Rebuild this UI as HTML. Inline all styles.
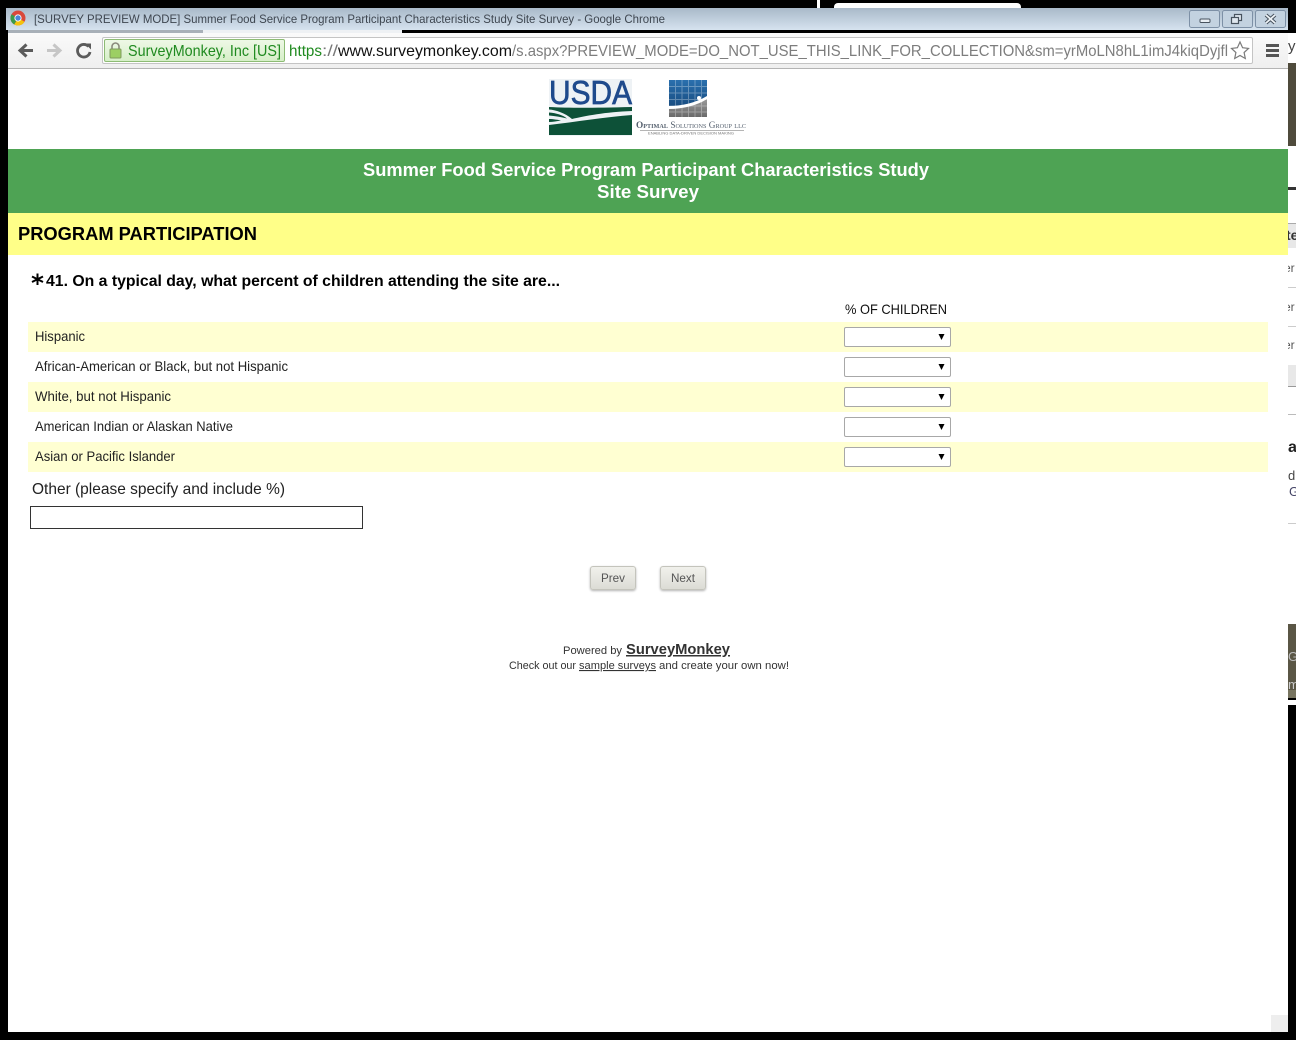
<!DOCTYPE html>
<html lang="en">
<head>
<meta charset="utf-8">
<title>[SURVEY PREVIEW MODE] Summer Food Service Program Participant Characteristics Study Site Survey</title>
<style>
html,body{margin:0;padding:0;width:1296px;height:1040px;overflow:hidden;background:#000}
div{position:absolute;box-sizing:border-box}
svg{position:absolute;left:0;top:0}
text{font-family:"Liberation Sans",Arial,sans-serif;white-space:pre}
.row{left:28px;width:1240px;height:30px;background:#ffffd2}
.sel{left:844px;width:107px;height:20px;background:#fff;border:1px solid #a8a8a8;border-radius:2px}
.btn{top:566px;width:46px;height:24px;border:1px solid #c4c4bc;border-radius:3px;background:linear-gradient(#f1f1ec,#dcdcd5);box-shadow:0 1px 2px rgba(0,0,0,.3)}
</style>
</head>
<body>
<!-- background window peeking behind -->
<div style="left:817px;top:0;width:3px;height:8px;background:#fff"></div>
<div style="left:834px;top:3px;width:187px;height:6px;background:#fff;border-radius:4px 4px 0 0"></div>

<!-- right sliver -->
<div style="left:1288px;top:33px;width:8px;height:672px;background:#fff"></div>
<div style="left:1288px;top:63px;width:8px;height:83px;background:#4f4b3c"></div>
<div style="left:1288px;top:187px;width:8px;height:3px;background:#333"></div>
<div style="left:1288px;top:223px;width:8px;height:25px;background:#e8e8e8;border-top:1px solid #aaa"></div>
<div style="left:1288px;top:287px;width:8px;height:1px;background:#ccc"></div>
<div style="left:1288px;top:326px;width:8px;height:1px;background:#ccc"></div>
<div style="left:1288px;top:365px;width:8px;height:22px;background:#e8e8e8;border-bottom:1px solid #999"></div>
<div style="left:1288px;top:414px;width:8px;height:1px;background:#bbb"></div>
<div style="left:1288px;top:523px;width:8px;height:1px;background:#ccc"></div>
<div style="left:1288px;top:624px;width:8px;height:66px;background:#5a5645"></div>
<div style="left:1288px;top:690px;width:8px;height:8px;background:#77745f"></div>
<div style="left:1288px;top:698px;width:8px;height:2px;background:#000"></div>

<!-- title bar -->
<div style="left:6px;top:8px;width:1282px;height:22px;background:linear-gradient(#a9b9c9,#d6e3ef)"></div>
<div style="left:8px;top:30px;width:195px;height:3px;background:#a8b0b8"></div>
<div style="left:203px;top:30px;width:199px;height:3px;background:#eef1f4"></div>
<div style="left:402px;top:30px;width:886px;height:3px;background:#000"></div>
<!-- toolbar -->
<div style="left:8px;top:33px;width:1280px;height:36px;background:linear-gradient(#fafafa,#efefef);border-bottom:1px solid #b4b4b4"></div>
<div style="left:102px;top:37px;width:1151px;height:27px;background:#fff;border:1px solid #c4c4c4;border-radius:2px"></div>
<div style="left:104px;top:39px;width:181px;height:23px;background:linear-gradient(#eef8e6,#d6efc8);border:1px solid #8dbb74;border-radius:2px"></div>

<!-- page -->
<div style="left:8px;top:69px;width:1280px;height:963px;background:#fff"></div>
<div style="left:8px;top:149px;width:1280px;height:64px;background:#4ea354"></div>
<div style="left:8px;top:213px;width:1280px;height:42px;background:#ffff88"></div>

<div class="row" style="top:322px"></div>
<div class="row" style="top:382px"></div>
<div class="row" style="top:442px"></div>
<div class="sel" style="top:327px"></div>
<div class="sel" style="top:357px"></div>
<div class="sel" style="top:387px"></div>
<div class="sel" style="top:417px"></div>
<div class="sel" style="top:447px"></div>
<div style="left:30px;top:506px;width:333px;height:23px;background:#fff;border:1px solid #333"></div>
<div class="btn" style="left:590px"></div>
<div class="btn" style="left:660px"></div>
<div style="left:1271px;top:1015px;width:17px;height:17px;background:#eee"></div>

<svg width="1296" height="1040" viewBox="0 0 1296 1040" xmlns="http://www.w3.org/2000/svg">
  <defs>
    <linearGradient id="b" x1="0" y1="0" x2="0" y2="1"><stop offset="0" stop-color="#2a70ae"/><stop offset="1" stop-color="#123f6f"/></linearGradient>
    <linearGradient id="g" x1="0" y1="0" x2="0" y2="1"><stop offset="0" stop-color="#9a9a9a"/><stop offset="1" stop-color="#6a6a6a"/></linearGradient>
    <clipPath id="sliver"><rect x="1288" y="33" width="8" height="672"/></clipPath>
  </defs>
  <!-- Chrome logo -->
  <circle cx="18" cy="18" r="7.5" fill="#d9483b"/>
  <path d="M18 18 L24.5 21.8 A7.5 7.5 0 0 1 14.2 24.5 Z" fill="#f4c20d"/>
  <path d="M18 18 L14.2 24.5 A7.5 7.5 0 0 1 11.5 14.2 Z" fill="#3c9b4a"/>
  <circle cx="18" cy="18" r="3.6" fill="#fff"/>
  <circle cx="18" cy="18" r="2.7" fill="#4a86d8"/>

  <text x="34" y="23" font-size="12" fill="#3e4650" textLength="631" lengthAdjust="spacingAndGlyphs">[SURVEY PREVIEW MODE] Summer Food Service Program Participant Characteristics Study Site Survey - Google Chrome</text>

  <!-- window buttons -->
  <g fill="#c3d2e0" stroke="#7d90a6">
    <rect x="1189.5" y="10.5" width="30" height="17" rx="2"/>
    <rect x="1222.5" y="10.5" width="30" height="17" rx="2"/>
    <rect x="1255.5" y="10.5" width="30" height="17" rx="2"/>
  </g>
  <rect x="1200" y="19" width="10" height="3.5" rx="1" fill="#e8eef4" stroke="#47525e"/>
  <g fill="#dfe7ef" stroke="#47525e" stroke-width="1.2">
    <rect x="1234.5" y="14.5" width="7" height="6"/>
    <rect x="1231.5" y="17.5" width="7" height="6"/>
  </g>
  <path d="M1266 15 L1275 23 M1275 15 L1266 23" stroke="#47525e" stroke-width="3.8"/>
  <path d="M1266 15 L1275 23 M1275 15 L1266 23" stroke="#eef3f7" stroke-width="1.8"/>

  <!-- nav icons -->
  <path d="M33 50.5 H21 M26.5 44.5 L20 50.5 L26.5 56.5" fill="none" stroke="#5b5b5b" stroke-width="3"/>
  <path d="M47 50.5 H59 M53.5 44.5 L60 50.5 L53.5 56.5" fill="none" stroke="#c6c6c6" stroke-width="3"/>
  <path d="M88.5 46.5 A6.3 6.3 0 1 0 90 52" fill="none" stroke="#5b5b5b" stroke-width="2.8"/>
  <path d="M85 43.5 L91 43.5 L91 49.5 Z" fill="#5b5b5b"/>

  <!-- lock -->
  <path d="M112 49 V46.5 A3.5 3.5 0 0 1 119 46.5 V49" fill="none" stroke="#8a8a7c" stroke-width="1.6"/>
  <rect x="110" y="49" width="11" height="9" rx="1" fill="#9ccf63" stroke="#7f9b5e"/>

  <text x="128" y="56" font-size="16" fill="#1f8a1f" textLength="153" lengthAdjust="spacingAndGlyphs">SurveyMonkey, Inc [US]</text>
  <text x="289" y="56" font-size="16" fill="#1f8a1f" textLength="33" lengthAdjust="spacingAndGlyphs">https</text>
  <text x="322" y="56" font-size="16" fill="#777" textLength="16" lengthAdjust="spacingAndGlyphs">://</text>
  <text x="338" y="56" font-size="16" fill="#111" textLength="174" lengthAdjust="spacingAndGlyphs">www.surveymonkey.com</text>
  <text x="512" y="56" font-size="16" fill="#7d7d7d" textLength="716" lengthAdjust="spacingAndGlyphs">/s.aspx?PREVIEW_MODE=DO_NOT_USE_THIS_LINK_FOR_COLLECTION&amp;sm=yrMoLN8hL1imJ4kiqDyjfl</text>

  <!-- star -->
  <path d="M1240 42 L1242.6 47.7 L1248.5 48.4 L1244.1 52.5 L1245.3 58.5 L1240 55.5 L1234.7 58.5 L1235.9 52.5 L1231.5 48.4 L1237.4 47.7 Z" fill="#fff" stroke="#7b7b7b" stroke-width="1.2"/>
  <!-- menu -->
  <rect x="1266" y="44" width="13" height="3" fill="#555"/>
  <rect x="1266" y="49" width="13" height="3" fill="#555"/>
  <rect x="1266" y="54" width="13" height="3" fill="#555"/>

  <!-- USDA logo -->
  <rect x="549" y="79" width="83" height="57" fill="#eef2f5"/>
  <text x="549" y="104" font-size="33" fill="#1f4a8c" stroke="#1f4a8c" stroke-width=".7" textLength="83" lengthAdjust="spacingAndGlyphs">USDA</text>
  <path d="M549 107 C570 108 590 108 632 107 V111 C605 112 585 116 572 119 C565 113 556 110 549 109.500 Z" fill="#0d5138"/>
  <path d="M549 112.500 C556 113 563 115 567 118.500 C561 117 555 116 549 115.500 Z" fill="#0d5138"/>
  <path d="M549 119 C554 119 558 120 561 120.500 C557 121 553 122 549 122 Z" fill="#0d5138"/>
  <path d="M549 125 C575 122 605 117 632 115 V135 H549 Z" fill="#0d5138"/>

  <!-- Optimal logo -->
  <rect x="669" y="80" width="38" height="37" fill="url(#b)"/>
  <path d="M669 106 C682 106 695 103 707 96 V117 H669 Z" fill="#fff"/>
  <path d="M669 109 C682 109 696 106 707 99 V117 H669 Z" fill="url(#g)"/>
  <path d="M675.5 80V117M682 80V117M688.5 80V117M695 80V117M701.500 80V117M669 86.500H707M669 93H707M669 99.500H707M669 106H707M669 112H707" stroke="#fff" stroke-opacity=".3" stroke-width="1"/>
  <circle cx="699" cy="98" r="2" fill="#fff"/>
  <text x="636" y="128" font-size="9" fill="#55606e" font-variant="small-caps" textLength="110" lengthAdjust="spacingAndGlyphs" style="font-family:'Liberation Serif',serif;font-variant:small-caps"><tspan font-weight="700">Optimal</tspan> Solutions Group llc</text>
  <rect x="640" y="130" width="104" height="1" fill="#b5b5b5"/>
  <text x="648" y="134.500" font-size="3.500" fill="#777" textLength="86" lengthAdjust="spacingAndGlyphs">ENABLING DATA-DRIVEN DECISION MAKING</text>

  <!-- banner -->
  <g font-weight="700" fill="#fff" font-size="18">
    <text x="363" y="176" textLength="566" lengthAdjust="spacingAndGlyphs">Summer Food Service Program Participant Characteristics Study</text>
    <text x="597" y="198" textLength="102" lengthAdjust="spacingAndGlyphs">Site Survey</text>
  </g>
  <text x="18" y="240" font-size="18" font-weight="700" fill="#000" textLength="239" lengthAdjust="spacingAndGlyphs">PROGRAM PARTICIPATION</text>

  <!-- question -->
  <path d="M37.500 273.500V285M32 276.500L43 282M43 276.500L32 282" stroke="#000" stroke-width="2" fill="none"/>
  <text x="46" y="286" font-size="16" font-weight="700" fill="#000" textLength="514" lengthAdjust="spacingAndGlyphs">41. On a typical day, what percent of children attending the site are...</text>
  <text x="845" y="314" font-size="14" fill="#111" textLength="102" lengthAdjust="spacingAndGlyphs">% OF CHILDREN</text>

  <g font-size="14" fill="#222">
    <text x="35" y="341" textLength="50" lengthAdjust="spacingAndGlyphs">Hispanic</text>
    <text x="35" y="371" textLength="253" lengthAdjust="spacingAndGlyphs">African-American or Black, but not Hispanic</text>
    <text x="35" y="401" textLength="136" lengthAdjust="spacingAndGlyphs">White, but not Hispanic</text>
    <text x="35" y="431" textLength="198" lengthAdjust="spacingAndGlyphs">American Indian or Alaskan Native</text>
    <text x="35" y="461" textLength="140" lengthAdjust="spacingAndGlyphs">Asian or Pacific Islander</text>
  </g>
  <g fill="#000">
    <path d="M938.500 334h6l-3 6z"/>
    <path d="M938.500 364h6l-3 6z"/>
    <path d="M938.500 394h6l-3 6z"/>
    <path d="M938.500 424h6l-3 6z"/>
    <path d="M938.500 454h6l-3 6z"/>
  </g>

  <text x="32" y="494" font-size="16" fill="#222" textLength="253" lengthAdjust="spacingAndGlyphs">Other (please specify and include %)</text>

  <text x="601" y="582" font-size="12" fill="#555" textLength="24" lengthAdjust="spacingAndGlyphs">Prev</text>
  <text x="671" y="582" font-size="12" fill="#555" textLength="24" lengthAdjust="spacingAndGlyphs">Next</text>

  <!-- footer -->
  <text x="563" y="654" font-size="11" fill="#333" textLength="59" lengthAdjust="spacingAndGlyphs">Powered by</text>
  <text x="626" y="654" font-size="15" font-weight="700" fill="#333" text-decoration="underline" textLength="104" lengthAdjust="spacingAndGlyphs">SurveyMonkey</text>
  <text x="509" y="669" font-size="11" fill="#333" textLength="67" lengthAdjust="spacingAndGlyphs">Check out our</text>
  <text x="579" y="669" font-size="11" fill="#333" text-decoration="underline" textLength="77" lengthAdjust="spacingAndGlyphs">sample surveys</text>
  <text x="659" y="669" font-size="11" fill="#333" textLength="130" lengthAdjust="spacingAndGlyphs">and create your own now!</text>

  <!-- right sliver text -->
  <g font-size="14" fill="#333" clip-path="url(#sliver)">
    <text x="1288" y="51" font-size="15" fill="#444">y</text>
    <text x="1286" y="240" font-weight="700" fill="#333">te</text>
    <text x="1284" y="272" font-size="12" fill="#555">er</text>
    <text x="1284" y="311" font-size="12" fill="#555">er</text>
    <text x="1284" y="349" font-size="12" fill="#555">er</text>
    <text x="1288" y="452" font-size="16" font-weight="700" fill="#222">a</text>
    <text x="1288" y="480" font-size="13" fill="#444">d</text>
    <text x="1289" y="496" font-size="13" fill="#446">G</text>
    <text x="1288" y="661" font-size="13" fill="#bbb">G</text>
    <text x="1288" y="689" font-size="13" fill="#ccc">m</text>
  </g>
</svg>
</body>
</html>
